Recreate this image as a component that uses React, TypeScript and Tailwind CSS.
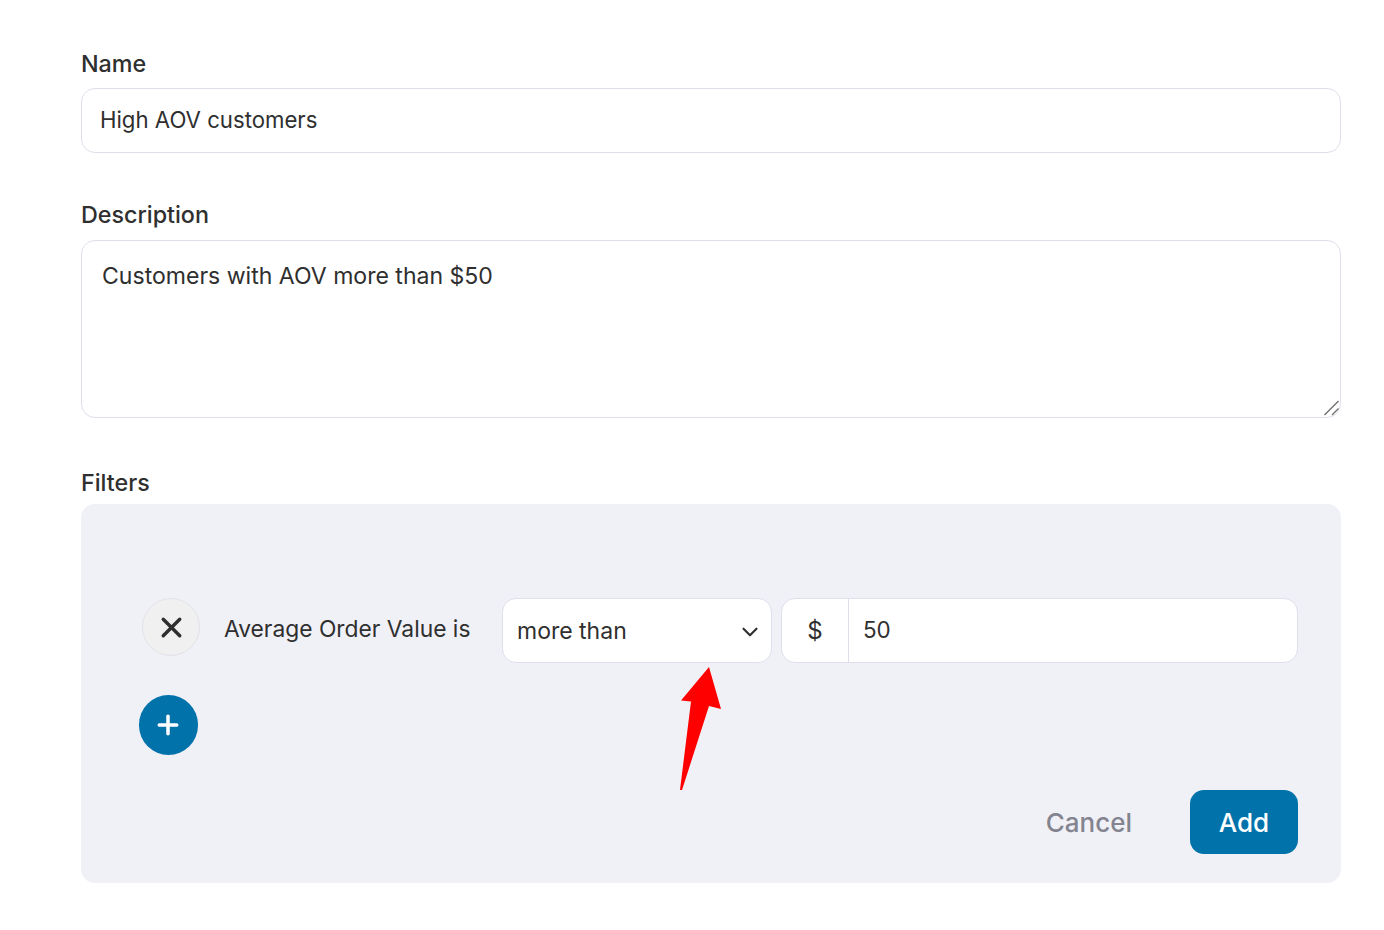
import React from "react";
import { ChevronDown, Plus, X } from "lucide-react";

const labelClass = "block text-[23.3px] leading-[28px] font-medium text-[#2f2f2f]";
const fieldClass = "bg-white border border-[#dfdfec] rounded-[14px] text-[#2f2f2f] outline-none";

export default function App() {
  return (
    <div className="min-h-[930px] bg-white font-['Inter',sans-serif] pl-[81px] pr-[43px] pt-[50px]">
      {/* Name */}
      <label className={labelClass}>Name</label>
      <input
        defaultValue="High AOV customers"
        className={`${fieldClass} mt-[10px] block w-full h-[65px] px-[18px] pb-[2px] text-[22.2px]`}
      />

      {/* Description */}
      <label className={`${labelClass} mt-[48px]`}>Description</label>
      <div className="relative mt-[11px]">
        <textarea
          defaultValue="Customers with AOV more than $50"
          className={`${fieldClass} block w-full h-[178px] px-[20px] pt-[19px] text-[23.05px] leading-[32px] resize-none`}
        />
        {/* resize grip */}
        <svg className="absolute right-[1px] bottom-[2px]" width="16" height="16" viewBox="0 0 16 16">
          <path d="M0.5 15 L14.5 1 M8 15 L14.5 8.5" stroke="#707070" strokeWidth="1.4" fill="none" />
        </svg>
      </div>

      {/* Filters */}
      <label className={`${labelClass} mt-[51px]`}>Filters</label>
      <div className="relative mt-[7px] h-[379px] rounded-[14px] bg-[#f0f1f7] pl-[58px] pr-[43px] pt-[94px]">
        <div className="flex items-center">
          <button className="ml-[3px] flex h-[58px] w-[58px] self-start items-center justify-center rounded-full border border-[#e2e2ea] bg-[#f0f0f1] text-[#2f2f2f]">
            <X size={33} strokeWidth={2.5} />
          </button>
          <span className="ml-[24px] w-[278px] text-[22.8px] text-[#2f2f2f] -mt-[3px]">Average Order Value is</span>
          <div className={`${fieldClass} flex h-[65px] w-[270px] items-center justify-between pl-[14px] pr-[8px] text-[23px]`}>
            <span className="mt-[2px]">more than</span>
            <ChevronDown size={26} strokeWidth={2} className="mt-[3px]" />
          </div>
          <div className={`${fieldClass} ml-[9px] flex h-[65px] flex-1 items-center text-[22.4px]`}>
            <span className="flex h-full w-[67px] items-center justify-center border-r border-[#dfdfec] text-[24px]">$</span>
            <span className="pl-[14px] -mt-[1px]">50</span>
          </div>
        </div>

        <button className="mt-[32px] flex h-[60px] w-[59px] items-center justify-center rounded-full bg-[#0272ab] text-white">
          <Plus size={30} strokeWidth={2.8} className="-mt-[1px] -ml-[1px]" />
        </button>

        <div className="mt-[35px] flex items-center justify-end">
          <button className="text-[26px] font-medium text-[#83848f]">Cancel</button>
          <button className="ml-[58px] h-[64px] w-[108px] rounded-[14px] bg-[#0272ab] text-[26px] font-medium text-white">Add</button>
        </div>

        {/* red annotation arrow */}
        <svg className="absolute left-[590px] top-[155px]" width="60" height="140" viewBox="0 0 60 140">
          <path d="M38 8 L10 41.5 L20 42.5 L9 131 L11 131 L38 47 L50 50 Z" fill="#ff0000" />
        </svg>
      </div>
    </div>
  );
}
